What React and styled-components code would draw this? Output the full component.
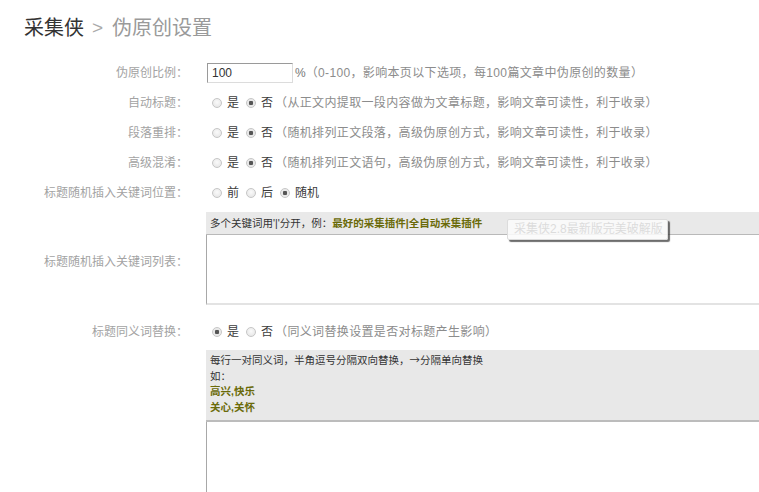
import React from 'react';
import styled, { createGlobalStyle } from 'styled-components';

const Global = createGlobalStyle`
  html, body { margin: 0; padding: 0; background: #fff; }
  body {
    font-family: "Liberation Sans", "Noto Sans CJK SC", sans-serif;
    overflow: hidden;
  }
  * { box-sizing: border-box; }
`;

const Page = styled.div`
  width: 759px;
  height: 492px;
  overflow: hidden;
  background: #fff;
`;

const Breadcrumb = styled.div`
  display: flex;
  align-items: center;
  padding: 14px 0 0 24px;
  height: 42px;
  font-size: 20px;
  line-height: 28px;
`;

const Crumb = styled.span`
  color: ${p => p.$muted ? '#9a9a9a' : '#333'};
`;

const Sep = styled.span`
  color: #aaa;
  margin: 0 9px 0 8px;
  font-size: 19px;
`;

const Form = styled.div`
  margin-top: 16px;
  font-size: 12px;
`;

const Row = styled.div`
  display: flex;
  align-items: ${p => p.$top ? 'flex-start' : 'center'};
  min-height: 30px;
  margin-top: ${p => p.$mt || 0}px;
`;

const Label = styled.div`
  flex: none;
  width: 188px;
  text-align: right;
  color: #a3a3a3;
  line-height: 16px;
  padding-top: ${p => p.$pt || 0}px;
`;

const Field = styled.div`
  flex: 1;
  min-width: 0;
  margin-left: 19px;
  display: flex;
  align-items: center;
  white-space: nowrap;
  line-height: 16px;
`;

const Block = styled.div`
  flex: 1;
  min-width: 0;
  margin-left: 18px;
  position: relative;
`;

const NumInput = styled.input`
  width: 86px;
  height: 20px;
  border: 1px solid;
  border-color: #9a9a9a #dcdcdc #dcdcdc #9a9a9a;
  padding: 0 4px;
  font-family: "Liberation Sans", sans-serif;
  font-size: 12px;
  color: #333;
  outline: none;
`;

const Percent = styled.span`
  color: #777;
  margin-left: 2px;
`;

const Hint = styled.span`
  color: #8c8c8c;
  letter-spacing: 0.35px;
`;

const Options = styled.div`
  display: flex;
  align-items: center;
  padding-left: 5px;
`;

const Option = styled.label`
  display: inline-flex;
  align-items: center;
  color: #3c3c3c;
  margin-right: ${p => p.$last ? 2 : 7}px;
`;

const Radio = styled.input.attrs({ type: 'radio' })`
  appearance: none;
  -webkit-appearance: none;
  width: 10px;
  height: 10px;
  margin: 0 5px 0 0;
  border-radius: 50%;
  border: 1px solid #c6c6c6;
  background: radial-gradient(circle at 50% 40%, #fafafa 0%, #e2e2e2 100%);
  &:checked {
    background: radial-gradient(circle, #555 0, #555 2px, #e6e6e6 2.5px, #f2f2f2 100%);
  }
`;

const BoxHeader = styled.div`
  height: 23px;
  line-height: 22px;
  padding: 0 4px;
  background: #e9e9e9;
  border-bottom: 1px solid #b9b9b9;
  font-size: 10.5px;
  color: #333;
  white-space: nowrap;
`;

const Em = styled.b`
  color: #6a6a08;
  font-weight: bold;
`;

const Area = styled.textarea`
  display: block;
  width: 100%;
  height: ${p => p.$h}px;
  border: 0;
  border-left: 1px solid #a8a8a8;
  border-bottom: 2px solid #e3e3e3;
  resize: none;
  outline: none;
  background: #fff;
  margin: 0;
`;

const Tooltip = styled.div`
  position: absolute;
  left: 301px;
  top: 7px;
  width: 161px;
  height: 21px;
  line-height: 19px;
  padding-left: 6px;
  border: 1px solid #dcdcdc;
  border-radius: 2px;
  background: rgba(250, 250, 250, 0.88);
  box-shadow: 2px 2px 1px rgba(60, 60, 60, 0.75);
  color: #dcdcdc;
  font-size: 12px;
  white-space: nowrap;
`;

const SynHint = styled.div`
  background: #e8e8e8;
  padding: 2px 4px 5px;
  line-height: 15.5px;
  font-size: 10.5px;
  color: #333;
  border-bottom: 2px solid #bcbcbc;
`;

const Line = styled.div``;

const Arrow = styled.span`
  font-family: "Noto Sans CJK SC", sans-serif;
`;

function RadioSet({ name, items, checked }) {
  return (
    <Options>
      {items.map((it, i) => (
        <Option key={it} $last={i === items.length - 1}>
          <Radio name={name} defaultChecked={i === checked} />
          {it}
        </Option>
      ))}
    </Options>
  );
}

export default function App() {
  return (
    <Page>
      <Global />
      <Breadcrumb>
        <Crumb>采集侠</Crumb>
        <Sep>&gt;</Sep>
        <Crumb $muted>伪原创设置</Crumb>
      </Breadcrumb>
      <Form>
        <Row>
          <Label>伪原创比例：</Label>
          <Field>
            <NumInput defaultValue="100" />
            <Percent>%</Percent>
            <Hint>（0-100，影响本页以下选项，每100篇文章中伪原创的数量）</Hint>
          </Field>
        </Row>
        <Row>
          <Label>自动标题：</Label>
          <Field>
            <RadioSet name="auto" items={['是', '否']} checked={1} />
            <Hint>（从正文内提取一段内容做为文章标题，影响文章可读性，利于收录）</Hint>
          </Field>
        </Row>
        <Row>
          <Label>段落重排：</Label>
          <Field>
            <RadioSet name="para" items={['是', '否']} checked={1} />
            <Hint>（随机排列正文段落，高级伪原创方式，影响文章可读性，利于收录）</Hint>
          </Field>
        </Row>
        <Row>
          <Label>高级混淆：</Label>
          <Field>
            <RadioSet name="mix" items={['是', '否']} checked={1} />
            <Hint>（随机排列正文语句，高级伪原创方式，影响文章可读性，利于收录）</Hint>
          </Field>
        </Row>
        <Row>
          <Label>标题随机插入关键词位置：</Label>
          <Field>
            <RadioSet name="pos" items={['前', '后', '随机']} checked={2} />
          </Field>
        </Row>
        <Row $mt={4}>
          <Label $pt={7}>标题随机插入关键词列表：</Label>
          <Block>
            <BoxHeader>
              多个关键词用'|'分开，例：<Em>最好的采集插件|全自动采集插件</Em>
            </BoxHeader>
            <Area $h={70} />
            <Tooltip>采集侠2.8最新版完美破解版</Tooltip>
          </Block>
        </Row>
        <Row $mt={12}>
          <Label>标题同义词替换：</Label>
          <Field>
            <RadioSet name="syn" items={['是', '否']} checked={0} />
            <Hint>（同义词替换设置是否对标题产生影响）</Hint>
          </Field>
        </Row>
        <Row $top $mt={3}>
          <Label />
          <Block>
            <SynHint>
              <Line>每行一对同义词，半角逗号分隔双向替换，<Arrow>→</Arrow>分隔单向替换</Line>
              <Line>如：</Line>
              <Line><Em>高兴,快乐</Em></Line>
              <Line><Em>关心,关怀</Em></Line>
            </SynHint>
            <Area $h={110} />
          </Block>
        </Row>
      </Form>
    </Page>
  );
}
